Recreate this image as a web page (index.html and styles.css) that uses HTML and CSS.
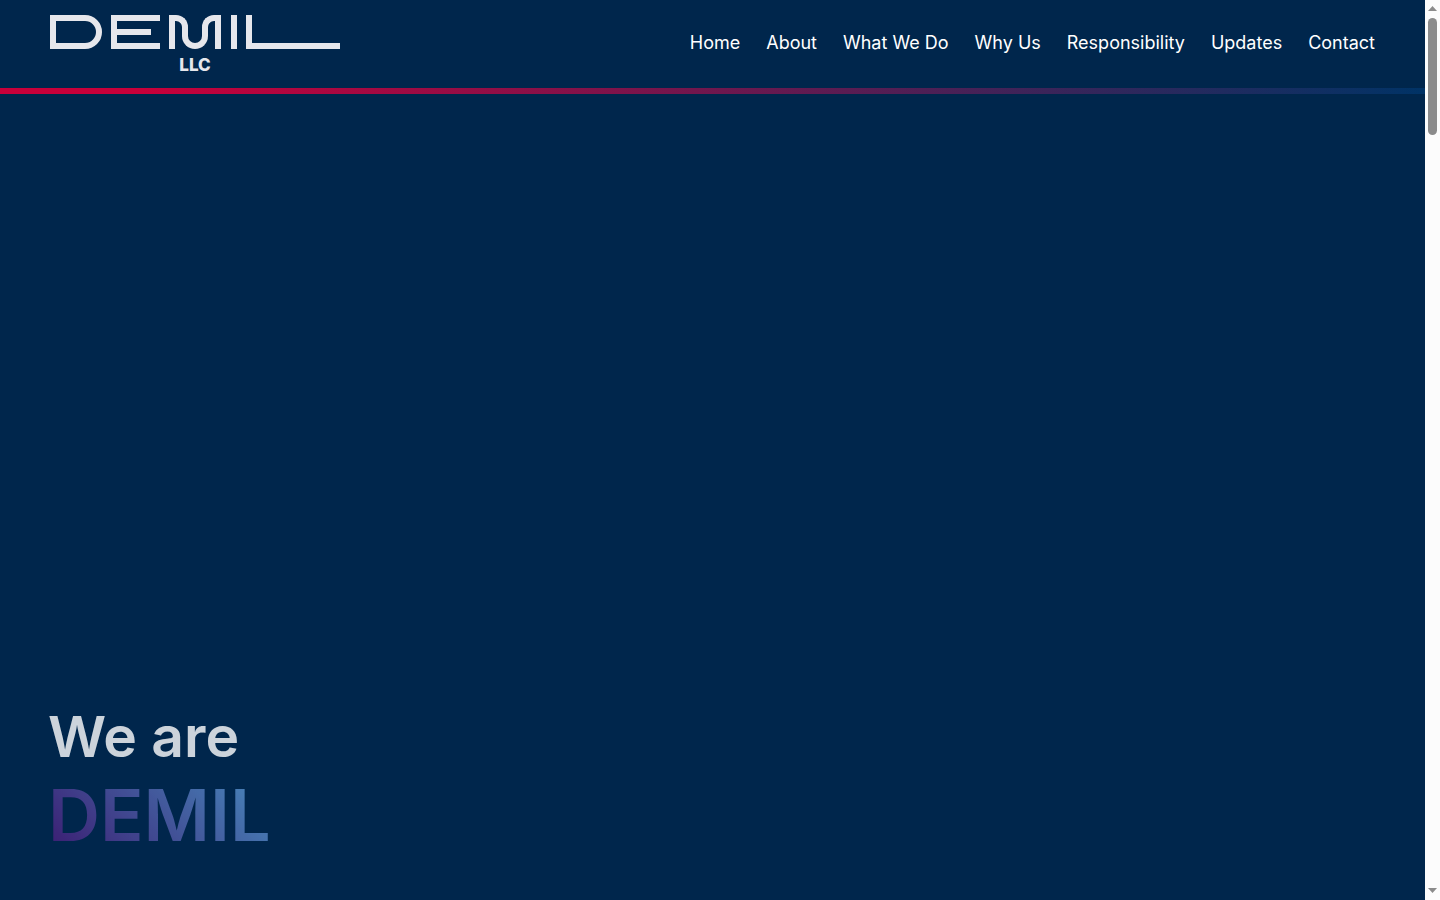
FILE: index.html
```
<!DOCTYPE html>
<html lang="en">
<head>
  <meta charset="UTF-8" />
  <meta name="viewport" content="width=device-width, initial-scale=1.0"/>
  <title>DEMIL LLC</title>
  <link rel="stylesheet" href="styles.css">
</head>
<body>
  <div class="page">
    <header class="header">
      <a class="logo" href="#" aria-label="DEMIL LLC">
        <!-- Wordmark, built from bars and rounded boxes -->
        <span class="wordmark">
          <span class="mark-d"></span>
          <span class="mark-e"><span class="mark-e-bar"></span></span>
          <span class="mark-m">
            <span class="stem"></span>
            <span class="arch arch-left"></span>
            <span class="cup"></span>
            <span class="arch arch-right"></span>
            <span class="stem"></span>
          </span>
          <span class="stem"></span>
          <span class="mark-l"></span>
        </span>
        <span class="logo-sub">LLC</span>
      </a>

      <nav class="nav">
        <a href="#home">Home</a>
        <a href="#about">About</a>
        <a href="#what">What We Do</a>
        <a href="#why">Why Us</a>
        <a href="#responsibility">Responsibility</a>
        <a href="#updates">Updates</a>
        <a href="#contact">Contact</a>
      </nav>
    </header>
    <div class="header-line"></div>

    <main class="hero" id="home">
      <h1 class="hero-title">
        <span class="hero-intro">We are</span>
        <span class="hero-name">DEMIL</span>
      </h1>
    </main>
  </div>

  <div class="scrollbar" aria-hidden="true">
    <svg width="15" height="18" viewBox="0 0 15 18"><path d="M3 11 L7.500 6 L12 11 Z" fill="#8b8b8b"/></svg>
    <div class="scroll-track"><div class="scroll-thumb"></div></div>
    <svg width="15" height="18" viewBox="0 0 15 18"><path d="M3 6 L7.500 11 L12 6 Z" fill="#8b8b8b"/></svg>
  </div>
</body>
</html>
```

FILE: styles.css
```
* {
  box-sizing: border-box;
  margin: 0;
  padding: 0;
}

body {
  font-family: Inter, "Liberation Sans", sans-serif;
  display: flex;
  min-height: 100vh;
  background: #00264c;
  color: #fff;
}

.page {
  flex: 1;
  display: flex;
  flex-direction: column;
}

/* Header */
.header {
  display: flex;
  justify-content: space-between;
  align-items: flex-start;
  height: 88px;
  padding: 15px 50px 0;
}

.logo {
  width: 290px;
  color: #e6e7ec;
  text-decoration: none;
}

.wordmark {
  display: flex;
  gap: 9px;
  height: 34px;
}

.stem {
  width: 6px;
  height: 34px;
  background: currentColor;
}

.mark-d {
  width: 52px;
  border: 6px solid;
  border-radius: 0 17px 17px 0;
}

.mark-e {
  display: flex;
  align-items: center;
  width: 49px;
  border: 6px solid;
  border-right: none;
}

.mark-e-bar {
  width: 34px;
  height: 6px;
  background: currentColor;
}

.mark-m {
  display: flex;
  width: 53px;
}

.arch {
  width: 13px;
  height: 18px;
  border-top: 6px solid;
}

.arch-left {
  border-right: 6px solid;
  border-top-right-radius: 12px;
}

.arch-right {
  border-left: 6px solid;
  border-top-left-radius: 12px;
}

.cup {
  width: 26px;
  height: 17px;
  margin: 17px -6px 0;
  border: 6px solid;
  border-top: none;
  border-radius: 0 0 13px 13px;
}

.mark-l {
  flex: 1;
  border-left: 6px solid;
  border-bottom: 6px solid;
}

.logo-sub {
  display: block;
  margin-top: 6px;
  font-size: 17px;
  font-weight: 800;
  line-height: 20px;
  text-align: center;
}

.nav {
  display: flex;
  gap: 26px;
  padding-top: 16px;
}

.nav a {
  color: #fff;
  font-size: 18px;
  line-height: 24px;
  text-decoration: none;
  white-space: nowrap;
}

.header-line {
  height: 6px;
  background: linear-gradient(to right, #c8003a 10%, #003366);
}

/* Hero */
.hero {
  flex: 1;
  display: flex;
  align-items: flex-end;
  padding: 0 48px 41px;
}

.hero-title {
  font-weight: 600;
  opacity: 0.8;
}

.hero-intro {
  display: block;
  font-size: 57px;
  line-height: 68px;
}

.hero-name {
  display: table;
  font-size: 72px;
  line-height: 88px;
  background: linear-gradient(45deg, #4b1e7e 5%, #5a9bd5 92%);
  -webkit-background-clip: text;
  background-clip: text;
  color: transparent;
}

/* Scrollbar */
.scrollbar {
  display: flex;
  flex-direction: column;
  width: 15px;
  background: #fcfcfc;
}

.scroll-track {
  flex: 1;
  padding: 0 3px;
}

.scroll-thumb {
  height: 117px;
  border-radius: 5px;
  background: #8b8b8b;
}
```
